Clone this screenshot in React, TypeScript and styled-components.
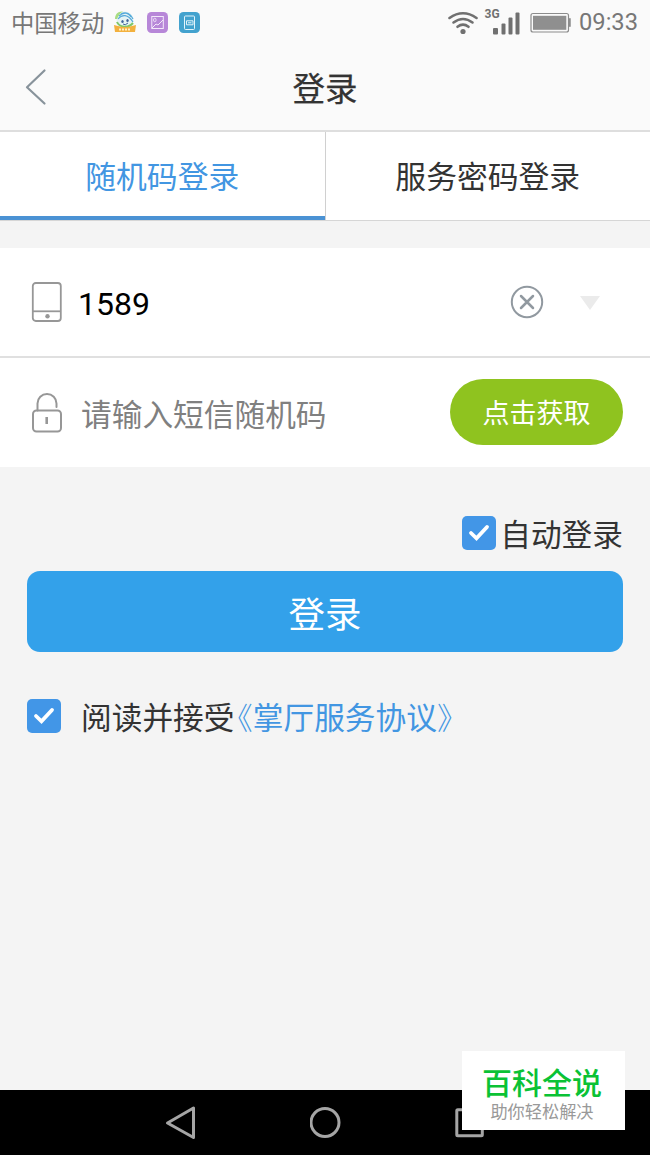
import React from "react";
import styled, { createGlobalStyle } from "styled-components";

const GlobalStyle = createGlobalStyle`
  * { box-sizing: border-box; }
  body { margin: 0; background: #f4f4f4; }
  button { border: 0; padding: 0; font: inherit; background: none; }
  svg { display: block; flex: none; }
`;

const Screen = styled.div`
  position: relative;
  display: flex;
  flex-direction: column;
  width: 650px;
  height: 1155px;
  overflow: hidden;
  background: #f4f4f4;
  color: #333;
  font-family: Roboto, "Noto Sans CJK SC", sans-serif;
`;

const StatusBar = styled.div`
  display: flex;
  justify-content: space-between;
  height: 44px;
  padding: 0 12px 0 11px;
  background: #fafafa;
  color: #777;
`;

const StatusGroup = styled.div`
  display: flex;
  align-items: center;
  height: 44px;
`;

const StatusText = styled.span<{ $size: number; $gap?: number; $drop?: number }>`
  font-size: ${(p) => p.$size}px;
  line-height: 44px;
  padding-top: ${(p) => p.$drop ?? 0}px;
  margin-right: ${(p) => p.$gap ?? 0}px;
  white-space: nowrap;
`;

const AppIcon = styled.svg`
  margin-right: 11px;
`;

const Signals = styled.svg`
  margin-right: 7px;
`;

const Header = styled.header`
  display: grid;
  grid-template-columns: 100px 1fr 100px;
  align-items: center;
  height: 88px;
  border-bottom: 2px solid #dedede;
  background: #fafafa;
`;

const BackButton = styled.button`
  padding-left: 24px;
`;

const Title = styled.h1`
  margin: 5px 0 0;
  font-size: 32.5px;
  line-height: 48px;
  font-weight: 400;
  text-align: center;
  -webkit-text-stroke: 0.25px currentColor;
`;

const Tabs = styled.nav`
  display: flex;
  height: 89px;
  margin-bottom: 27px;
  border-bottom: 1px solid #d6d6d6;
  background: #fff;
`;

const Tab = styled.button<{ $active?: boolean }>`
  flex: 1;
  height: 88px;
  padding-top: 4px;
  border-left: ${(p) => (p.$active ? "0" : "1px solid #d0d0d0")};
  box-shadow: ${(p) => (p.$active ? "inset 0 -4px #4a92d4" : "none")};
  color: ${(p) => (p.$active ? "#4296e2" : "#333")};
  font-size: 30.8px;
  line-height: 84px;
`;

const Fields = styled.section`
  background: #fff;
`;

const Field = styled.div<{ $divided?: boolean }>`
  display: flex;
  align-items: center;
  height: ${(p) => (p.$divided ? 110 : 109)}px;
  padding: 0 27px 0 30px;
  border-bottom: ${(p) => (p.$divided ? "2px solid #e0e0e0" : "0")};
`;

const FieldText = styled.span<{ $hint?: boolean }>`
  flex: 1;
  margin-left: ${(p) => (p.$hint ? 17 : 14)}px;
  color: ${(p) => (p.$hint ? "#808080" : "#000")};
  font-size: ${(p) => (p.$hint ? 30.7 : 32)}px;
  line-height: 48px;
  padding-top: ${(p) => (p.$hint ? 6 : 3)}px;
`;

const FieldTools = styled.div`
  display: flex;
  align-items: center;
  gap: 35px;
  margin-right: 22px;
`;

const CodeButton = styled.button`
  width: 173px;
  height: 66px;
  margin-bottom: 2px;
  border-radius: 33px;
  background: #8fc31f;
  color: #fff;
  font-size: 27px;
  line-height: 66px;
  padding-top: 2px;
`;

const Actions = styled.main`
  display: flex;
  flex-direction: column;
  flex: 1;
  padding: 45px 27px 0;
`;

const CheckRow = styled.label<{ $end?: boolean; $gap: number }>`
  display: flex;
  align-items: center;
  justify-content: ${(p) => (p.$end ? "flex-end" : "flex-start")};
  gap: ${(p) => p.$gap}px;
  height: 41px;
  font-size: 30.7px;
  line-height: 44px;
`;

const CheckLabel = styled.span`
  padding-top: 6px;
  white-space: nowrap;
`;

const Agreement = styled.a`
  margin-left: 3px;
  color: #4296e2;
`;

const Bracket = styled.span`
  font-weight: 300;
  font-feature-settings: "halt";
`;

const LoginButton = styled.button`
  height: 81px;
  margin: 18px 0 43px;
  border-radius: 13px;
  background: #33a1ea;
  color: #fff;
  font-size: 36.5px;
  line-height: 81px;
  padding-top: 4px;
`;

const SystemNav = styled.footer`
  display: flex;
  align-items: center;
  height: 65px;
  padding-left: 165px;
  background: #000;
`;

const NavIcon = styled.svg`
  margin-right: 113px;
`;

const Badge = styled.aside`
  position: absolute;
  left: 462px;
  top: 1051px;
  display: flex;
  flex-direction: column;
  align-items: center;
  width: 163px;
  height: 79px;
  padding: 14px 3px 0 0;
  background: #fff;
`;

const BadgeName = styled.strong`
  color: #0ac235;
  font-size: 30px;
  font-weight: 500;
  line-height: 38px;
`;

const BadgeLine = styled.span`
  color: #999;
  font-size: 17.2px;
  line-height: 19px;
`;

function Checkbox() {
  return (
    <svg width="34" height="34" viewBox="0 0 34 34">
      <rect width="34" height="34" rx="5" fill="#4296e7" />
      <path d="M9 17l5.500 5.300L25 11" fill="none" stroke="#fff" strokeWidth="3.800" strokeLinecap="round" />
    </svg>
  );
}

function StatusIcons() {
  return (
    <>
      <AppIcon width="22" height="22" viewBox="0 0 22 22">
        <circle cx="11" cy="9" r="8.500" fill="#e4f3f4" />
        <path d="M1 8C1 3 4 0 9 .5 6 2 5 4 3 8" fill="#a9dc83" />
        <path d="M5 5c4-4 9-4 12 1M4 8c4-5 10-5 15 3M7 3c5-3 10 0 12 5" fill="none" stroke="#55a9d9" strokeWidth="1.200" />
        <path d="M3 11c2 5 11 7 16 1" fill="none" stroke="#7fc768" strokeWidth="2" />
        <ellipse cx="8.500" cy="10.500" rx="1.200" ry="1.500" fill="#40659a" />
        <ellipse cx="13.500" cy="9.500" rx="1.200" ry="1.500" fill="#40659a" />
        <path d="M9 13q2 2 5-1" fill="none" stroke="#40659a" />
        <path d="M0 14l4 1q7 2 14 0l4-1-1 7H1z" fill="#f3b13e" />
        <path d="M5 18.500h12" stroke="#fff0c5" strokeWidth="2" strokeDasharray="2 1" />
      </AppIcon>
      <AppIcon width="21" height="21" viewBox="0 0 21 21">
        <rect width="21" height="21" rx="4.500" fill="#b787d8" />
        <rect x="4.800" y="4.500" width="11.500" height="12" fill="none" stroke="#f3e8fa" />
        <path d="M5 16l4-4 2 1 5-5" fill="none" stroke="#f3e8fa" />
        <ellipse cx="7.800" cy="8" rx="1.300" ry="1.800" fill="none" stroke="#f3e8fa" strokeWidth=".8" />
      </AppIcon>
      <AppIcon width="21" height="21" viewBox="0 0 21 21">
        <rect width="21" height="21" rx="4.500" fill="#43a2ce" />
        <rect x="5.500" y="4" width="10" height="13.500" rx="1" fill="none" stroke="#e2f4fb" />
        <path d="M7.500 8.800h6.500v4H7.500z" fill="none" stroke="#e2f4fb" />
        <path d="M9 10.800h3.500" stroke="#e2f4fb" />
      </AppIcon>
    </>
  );
}

function SignalIcons() {
  return (
    <Signals width="124" height="32" viewBox="449 5 124 32">
      <g fill="none" stroke="#707070" strokeWidth="2.600" strokeLinecap="round">
        <path d="M450.500 17q13.500-9.500 27 0" />
        <path d="M454.500 21.500q9.500-7 19 0" />
        <path d="M458.500 25.800q5.500-4.200 11 0" />
      </g>
      <circle cx="464" cy="30.500" r="2.600" fill="#707070" />
      <text x="485.500" y="17" fill="#707070" fontFamily="Roboto, sans-serif" fontSize="12" fontWeight="700">3G</text>
      <g fill="#707070">
        <rect x="494" y="27" width="5" height="6.500" rx="1" />
        <rect x="502.500" y="22.500" width="4" height="11" rx="1" />
        <rect x="509.500" y="16.500" width="4" height="17" rx="1" />
        <rect x="516.500" y="11.500" width="4" height="22" rx="1" />
      </g>
      <rect x="532" y="12.500" width="37.500" height="18.500" rx="2" fill="none" stroke="#8c8c8c" strokeWidth="1.200" />
      <rect x="534" y="14.800" width="33.300" height="14" fill="#8f8f8f" />
      <path d="M570 17.500h1.500v8H570z" fill="#8c8c8c" stroke="#8c8c8c" strokeWidth=".5" />
    </Signals>
  );
}

export default function App() {
  return (
    <Screen>
      <GlobalStyle />
      <StatusBar>
        <StatusGroup>
          <StatusText $size={23.3} $gap={10} $drop={3}>中国移动</StatusText>
          <StatusIcons />
        </StatusGroup>
        <StatusGroup>
          <SignalIcons />
          <StatusText $size={23.7}>09:33</StatusText>
        </StatusGroup>
      </StatusBar>
      <Header>
        <BackButton aria-label="返回">
          <svg width="24" height="38" viewBox="0 0 24 38">
            <path d="M20.500 2.500L3 19.200l17.500 16.300" fill="none" stroke="#88939b" strokeWidth="2.200" strokeLinecap="round" strokeLinejoin="round" />
          </svg>
        </BackButton>
        <Title>登录</Title>
      </Header>
      <Tabs>
        <Tab $active>随机码登录</Tab>
        <Tab>服务密码登录</Tab>
      </Tabs>
      <Fields>
        <Field $divided>
          <svg width="34" height="42" viewBox="0 0 34 42">
            <rect x="2.800" y="2" width="28" height="38" rx="3" fill="none" stroke="#979797" strokeWidth="1.800" />
            <path d="M3 30.300h28" stroke="#979797" strokeWidth="1.800" />
            <circle cx="17.500" cy="35.300" r="2.200" fill="#979797" />
          </svg>
          <FieldText>1589</FieldText>
          <FieldTools>
            <svg width="34" height="34" viewBox="0 0 34 34" fill="none" stroke="#9199a0" strokeWidth="2">
              <circle cx="17" cy="17" r="15.200" />
              <path d="M11 11l12 12M23 11L11 23" strokeWidth="2.500" strokeLinecap="round" />
            </svg>
            <svg width="22" height="16" viewBox="0 0 22 16">
              <path d="M1 2h20L11 16z" fill="#ebebeb" />
            </svg>
          </FieldTools>
        </Field>
        <Field>
          <svg width="34" height="42" viewBox="0 0 34 42" fill="none" stroke="#979797" strokeWidth="2">
            <rect x="3" y="18.500" width="28" height="21" rx="3.500" />
            <path d="M7.500 18.500v-7a9.500 9.500 0 0 1 19 0v3.500" strokeLinecap="round" />
            <path d="M16.700 25v7" strokeWidth="2.600" />
          </svg>
          <FieldText $hint>请输入短信随机码</FieldText>
          <CodeButton>点击获取</CodeButton>
        </Field>
      </Fields>
      <Actions>
        <CheckRow $end $gap={4}>
          <Checkbox />
          <CheckLabel>自动登录</CheckLabel>
        </CheckRow>
        <LoginButton>登录</LoginButton>
        <CheckRow $gap={20}>
          <Checkbox />
          <CheckLabel>
            阅读并接受
            <Agreement>
              <Bracket>《</Bracket>掌厅服务协议<Bracket>》</Bracket>
            </Agreement>
          </CheckLabel>
        </CheckRow>
      </Actions>
      <SystemNav>
        <NavIcon width="32" height="36" viewBox="0 0 32 36">
          <path d="M28.500 3v29.500L2.500 18z" fill="none" stroke="#a5a5a5" strokeWidth="3" strokeLinejoin="round" />
        </NavIcon>
        <NavIcon width="32" height="32" viewBox="0 0 32 32">
          <circle cx="15" cy="15.500" r="14" fill="none" stroke="#a5a5a5" strokeWidth="3" />
        </NavIcon>
        <svg width="30" height="30" viewBox="0 0 30 30">
          <rect x="1.800" y="1.800" width="25.500" height="26" rx="1" fill="none" stroke="#a5a5a5" strokeWidth="3" />
        </svg>
      </SystemNav>
      <Badge>
        <BadgeName>百科全说</BadgeName>
        <BadgeLine>助你轻松解决</BadgeLine>
      </Badge>
    </Screen>
  );
}
